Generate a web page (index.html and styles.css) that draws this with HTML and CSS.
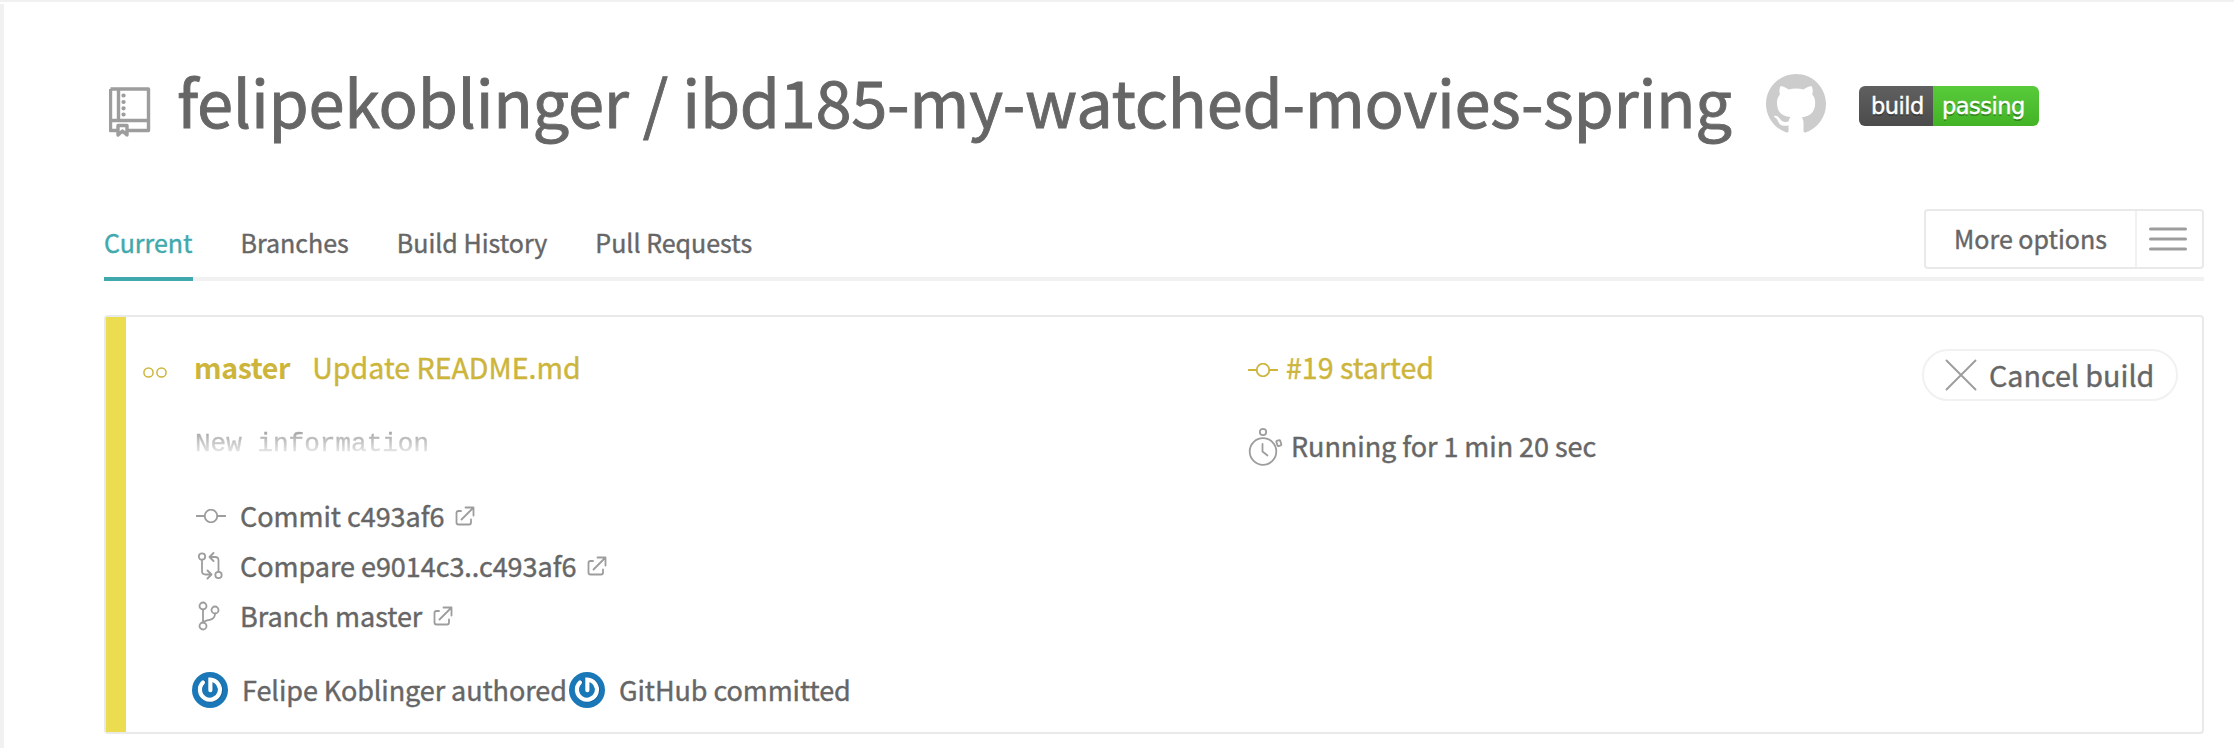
FILE: index.html
```html
<!DOCTYPE html>
<html lang="en">
<head>
<meta charset="utf-8">
<title>felipekoblinger / ibd185-my-watched-movies-spring</title>
<link rel="stylesheet" href="styles.css">
</head>
<body>
<svg class="defs" width="0" height="0" aria-hidden="true">
  <symbol id="commit" viewBox="0 0 30 14"><circle cx="15" cy="7" r="6.3"/><path d="M0.5 7h8.2M21.3 7h8.2"/></symbol>
  <symbol id="external" viewBox="0 0 20 20"><path d="M6 5H3.500Q1.500 5 1.500 7v9.500q0 2 2 2h10.500q2 0 2-2V13.500M6.500 13.500L18 2M10.500 1.500h8v8"/></symbol>
  <symbol id="avatar" viewBox="0 0 36 36"><circle class="disc" cx="18" cy="18" r="18"/><path class="shade" d="M12 10a10.300 10.300 0 1 0 7-2.300v10"/><path class="mark" d="M11 10.500a10 10 0 1 0 7.400-2.800v10.500"/></symbol>
</svg>
<main class="page">
  <header class="repo">
    <svg class="repo-icon" viewBox="0 0 42 50"><path d="M1.500 2h38v41.500H18M8 43.500H1.500V2M1.500 33.500h38M9.500 2v31.500"/><path class="dots" d="M14.500 8.500h.1M14.500 15h.1M14.500 21.300h.1M14.500 27.500h.1"/><path class="ribbon" d="M9 48V38.500h9V48l-4.500-4z"/></svg>
    <h1 class="repo-title">felipekoblinger / ibd185-my-watched-movies-spring</h1>
    <svg class="octocat" viewBox="0 0 16 16"><path d="M8 0C3.580 0 0 3.580 0 8c0 3.540 2.290 6.530 5.470 7.590.4.070.55-.17.55-.38 0-.19-.01-.82-.01-1.490-2.010.37-2.530-.49-2.690-.94-.09-.23-.48-.94-.82-1.130-.28-.15-.68-.52-.01-.53.63-.01 1.080.58 1.230.82.72 1.210 1.870.87 2.330.66.070-.52.28-.87.51-1.070-1.780-.2-3.640-.89-3.640-3.950 0-.87.31-1.590.82-2.150-.08-.2-.36-1.020.08-2.120 0 0 .67-.21 2.200.82.64-.18 1.320-.27 2-.27s1.360.09 2 .27c1.530-1.040 2.200-.82 2.200-.82.44 1.100.16 1.920.08 2.120.51.56.82 1.270.82 2.150 0 3.070-1.870 3.750-3.650 3.950.29.25.54.73.54 1.480 0 1.070-.01 1.930-.01 2.200 0 .21.15.46.55.38A8.010 8.010 0 0 0 16 8c0-4.420-3.580-8-8-8z"/></svg>
    <div class="badge"><span class="badge-key">build</span><span class="badge-value">passing</span></div>
  </header>
  <nav class="tabs">
    <a class="tab tab-active">Current</a>
    <a class="tab">Branches</a>
    <a class="tab">Build History</a>
    <a class="tab">Pull Requests</a>
    <button class="options"><span class="options-label">More options</span><svg class="burger" viewBox="0 0 38 24"><path d="M1.500 2h35M1.500 12h35M1.500 22h35"/></svg></button>
  </nav>
  <section class="build">
    <div class="bar"></div>
    <div class="state"><svg class="dots-icon" viewBox="0 0 24 11"><circle cx="5.500" cy="5.500" r="4.600"/><circle cx="18.500" cy="5.500" r="4.600"/></svg></div>
    <div class="details">
      <h2 class="subject"><strong class="branch">master</strong><span class="message">Update README.md</span></h2>
      <pre class="body-text">New information</pre>
      <ul class="links">
        <li class="link"><span class="slot"><svg class="icon commit-icon"><use href="#commit"/></svg></span><span>Commit c493af6</span><svg class="icon ext"><use href="#external"/></svg></li>
        <li class="link"><span class="slot"><svg class="icon compare-icon" viewBox="0 0 26 28"><circle cx="5" cy="4.500" r="3.200"/><circle cx="21.500" cy="23" r="3.200"/><path d="M5 8v11q0 3.500 3.500 3.500H14M10.500 18.500l4 4-4 4M21.500 19.500V8.500q0-3.500-3.500-3.500h-5M16.500 1l-4 4 4 4"/></svg></span><span>Compare e9014c3..c493af6</span><svg class="icon ext"><use href="#external"/></svg></li>
        <li class="link"><span class="slot"><svg class="icon branch-icon" viewBox="0 0 22 30"><circle cx="5" cy="5" r="3.500"/><circle cx="5" cy="25" r="3.500"/><circle cx="17" cy="9" r="3.500"/><path d="M5 8.500v13M17 12.500q0 5.500-5.500 6.300Q6.500 19.500 5 21.500"/></svg></span><span>Branch master</span><svg class="icon ext"><use href="#external"/></svg></li>
      </ul>
      <div class="people">
        <div class="person person-author"><svg class="avatar"><use href="#avatar"/></svg><span>Felipe Koblinger authored</span></div>
        <div class="person"><svg class="avatar"><use href="#avatar"/></svg><span>GitHub committed</span></div>
      </div>
    </div>
    <div class="stats">
      <div class="number"><svg class="icon commit-icon"><use href="#commit"/></svg><span>#19 started</span></div>
      <div class="duration"><svg class="icon watch" viewBox="0 0 35 40"><circle cx="15" cy="24.500" r="13.300"/><circle cx="15" cy="5" r="3.200"/><path d="M14.500 17v7.500l5 4"/><rect x="28.800" y="13.300" width="4" height="5.500" rx=".8" transform="rotate(-18 31 16)"/></svg><span>Running for 1 min 20 sec</span></div>
    </div>
    <button class="cancel"><svg class="icon cross" viewBox="0 0 32 32"><path d="M1.500 1.500l29 29M30.500 1.500l-29 29"/></svg><span>Cancel build</span></button>
  </section>
</main>
</body>
</html>
```
FILE: styles.css
```css
* { box-sizing: border-box; margin: 0; padding: 0; }
body {
  height: 748px;
  overflow: hidden;
  background: #fff;
  border-top: 2px solid #f1f1f1;
  padding-top: 2px;
  color: #666;
  font: 27px/40px "Noto Sans CJK SC", "Noto Sans", sans-serif;
  -webkit-text-stroke: .4px;
}
svg { display: block; flex: none; fill: none; }
.defs { position: absolute; }
button { background: #fff; color: inherit; font: inherit; }
.page { height: 744px; border-left: 4px solid #f1f1f1; padding: 0 30px 0 100px; }

.repo { display: flex; align-items: flex-start; height: 205px; padding: 51px 0 0 5px; }
.repo-icon { width: 42px; height: 50px; margin-top: 32px; stroke: #9d9d9d; stroke-width: 3.4; stroke-linejoin: round; }
.repo-icon .dots { stroke-width: 4.2; stroke-linecap: round; }
.repo-icon .ribbon { fill: #fff; }
.repo-title { width: 1589px; margin-left: 26px; font-size: 65px; line-height: 90px; font-weight: 400; letter-spacing: -.3px; white-space: nowrap; -webkit-text-stroke: .9px; }
.octocat { width: 60px; height: 60px; margin-top: 19px; fill: #ccc; }
.badge {
  display: flex; width: 180px; height: 40px; margin: 31px 0 0 33px; border-radius: 6px; overflow: hidden;
  color: #fff; font: 22.5px/40px "DejaVu Sans", sans-serif; letter-spacing: -.5px; text-shadow: 0 2px 0 rgba(1, 1, 1, .3);
}
.badge-key { width: 74px; padding-left: 12px; background: linear-gradient(#606060, #4b4b4b); }
.badge-value { flex: 1; padding-left: 9px; background: linear-gradient(#57cb3a, #44b327); }

.tabs { display: flex; align-items: flex-start; height: 72px; border-bottom: 4px solid #f1f1f1; font-size: 25px; }
.tab { height: 72px; padding-top: 15px; line-height: 36px; margin-right: 48px; white-space: nowrap; }
.tab-active { color: #40a9ad; border-bottom: 4px solid #40a9ad; }
.options { display: flex; width: 280px; height: 60px; margin-left: auto; border: 2px solid #e9e9e9; border-radius: 4px; }
.options-label { width: 211px; padding-left: 28px; border-right: 2px solid #f1f1f1; line-height: 55px; text-align: left; }
.burger { width: 38px; height: 24px; margin: 16px 0 0 12px; stroke: #9d9d9d; stroke-width: 3; stroke-linecap: round; }

.build {
  display: grid; grid-template-columns: 20px 68px 1053px 1fr 256px; height: 419px; margin-top: 34px; padding-right: 24px;
  border: 2px solid #e9e9e9; border-radius: 4px; white-space: nowrap;
}
.bar { background: #ebdc50; }
.state { padding: 50px 0 0 17px; }
.dots-icon { width: 24px; height: 11px; stroke: #cdb53c; stroke-width: 1.5; }
.details { padding-top: 30px; }
.subject { display: flex; gap: 22px; font-size: 28.600px; font-weight: 400; color: #cdb53c; }
.branch { font-weight: 700; letter-spacing: -.4px; -webkit-text-stroke: 0; }
.body-text {
  width: 240px; height: 46px; margin-top: 34px; padding-left: 1px; font: 26px/46px "Liberation Mono", monospace;
  color: transparent; background: linear-gradient(#999 15%, #f0f0f0 75%); background-clip: text; -webkit-background-clip: text;
}
.links { margin-top: 24px; list-style: none; }
.link { display: flex; align-items: center; height: 50px; letter-spacing: -.04px; }
.slot { width: 46px; padding-left: 2px; }
.icon { stroke: #9d9d9d; stroke-width: 1.8; stroke-linecap: round; stroke-linejoin: round; }
.commit-icon { width: 30px; height: 14px; }
.compare-icon { width: 26px; height: 28px; margin-left: 1px; }
.branch-icon { width: 22px; height: 30px; margin-left: 2px; }
.ext { width: 20px; height: 20px; margin-left: 11px; }
.people { display: flex; margin-top: 31px; letter-spacing: -.08px; }
.person { display: flex; align-items: center; gap: 14px; height: 36px; margin-left: -2px; }
.person-author { width: 379px; }
.avatar { width: 36px; height: 36px; }
.disc { fill: #1a78b8; }
.mark { stroke: #fff; stroke-width: 4.2; stroke-linecap: round; }
.shade { stroke: #145c94; stroke-width: 4.2; stroke-linecap: round; }
.stats { padding: 30px 0 0 1px; }
.number { display: flex; align-items: center; gap: 8px; font-size: 28.600px; color: #cdb53c; }
.number .icon { stroke: #cdb53c; margin-top: 5px; }
.duration { display: flex; align-items: center; gap: 8px; margin-top: 38px; letter-spacing: -.05px; }
.watch { width: 35px; height: 40px; margin-top: 2px; }
.cancel { display: flex; align-items: center; height: 52px; margin-top: 32px; padding-left: 21px; gap: 12px; border: 2px solid #f1f1f1; border-radius: 26px; font-size: 28.700px; line-height: 46px; }
.cross { width: 32px; height: 32px; stroke-width: 1.9; }
```
